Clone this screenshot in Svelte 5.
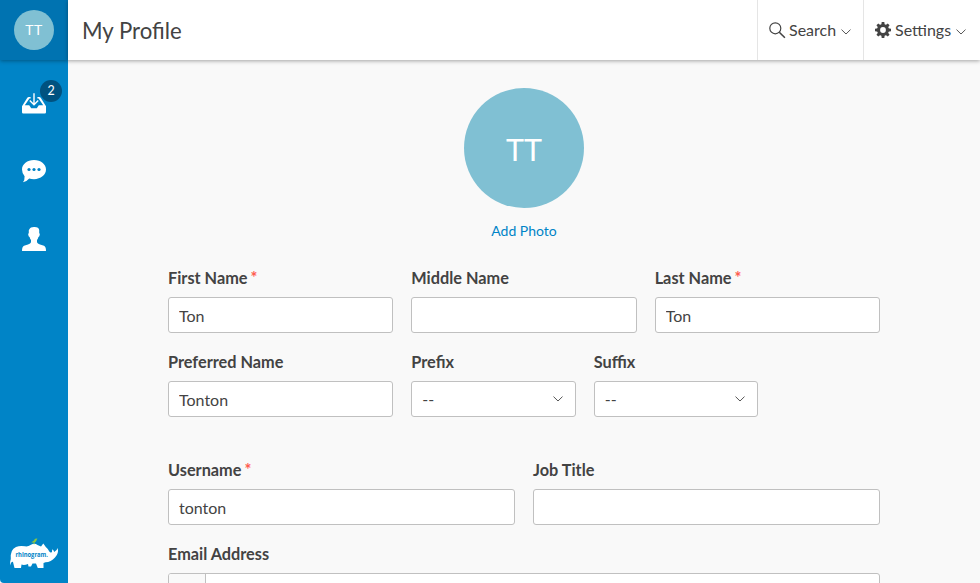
<script>
  const rows = [
    [
      { label: 'First Name', value: 'Ton', required: true, span: 4 },
      { label: 'Middle Name', value: '', span: 4 },
      { label: 'Last Name', value: 'Ton', required: true, span: 4 }
    ],
    [
      { label: 'Preferred Name', value: 'Tonton', span: 4 },
      { label: 'Prefix', value: '--', span: 3, select: true },
      { label: 'Suffix', value: '--', span: 3, select: true }
    ],
    [
      { label: 'Username', value: 'tonton', required: true, span: 6 },
      { label: 'Job Title', value: '', span: 6 }
    ]
  ];
</script>

{#snippet chevron()}
  <svg class="chevron" width="10" height="6" viewBox="0 0 10 6"><path d="M.5.6 5 5 9.5.6" fill="none" stroke="currentColor" stroke-width=".9" /></svg>
{/snippet}

<div class="app">
  <aside>
    <div class="user"><span class="avatar small">TT</span></div>
    <nav>
      <a class="item" href="#inbox" aria-label="Inbox">
        <svg width="24" height="24" viewBox="0 0 24 24">
          <path fill="#fff" d="M0 15.2 5 7.2Q5.6 6 7 6H8.6V7.5H7.4L2.8 14.2H7.2L9.2 17.2H14.8L16.8 14.2H21.2L16.6 7.5H15.4V6H17Q18.4 6 19 7.2L24 15.2V21.3Q24 22.5 22.8 22.5H1.2Q0 22.5 0 21.3Z" />
          <path fill="none" stroke="#fff" stroke-width="1.4" d="M12 2.2V13.5M7.8 9.5 12 13.7 16.2 9.5" />
        </svg>
        <span class="badge">2</span>
      </a>
      <a class="item" href="#messages" aria-label="Messages">
        <svg width="24" height="24" viewBox="0 0 24 24">
          <path fill="#fff" d="M12 1C18.7 1 24 5.1 24 10.6S18.7 20.2 12 20.2Q9.3 20.2 7.2 19.5Q4.8 22.6 1 23.2Q2.8 21 2.6 17.2Q0 14.4 0 10.6C0 5.1 5.3 1 12 1Z" />
          <g fill="#0084c7"><circle cx="7" cy="10.5" r="1.6" /><circle cx="12" cy="10.5" r="1.6" /><circle cx="17" cy="10.5" r="1.6" /></g>
        </svg>
      </a>
      <a class="item" href="#contacts" aria-label="Contacts">
        <svg width="24" height="24" viewBox="0 0 24 24">
          <path fill="#fff" d="M7.5 2Q8.3 0 12 0Q16.8-.1 17.2 3V6.3Q18 6.5 17.7 8Q17.3 10 16.4 10Q16 12 15 13V15.3Q15.4 16.6 18 17.4L22 18.7Q24 19.5 24 24H0Q0 19.5 2 18.7L6 17.4Q8.6 16.6 9 15.3V13Q8 12 7.6 10Q6.7 10 6.3 8Q6 6.5 6.8 6.3V3.2Z" />
        </svg>
      </a>
    </nav>
    <svg class="logo" width="50" height="34" viewBox="0 0 50 34">
      <path fill="#fff" d="M1.4 28.5Q.6 25 1.8 22Q1 12.5 7 10Q11 8.2 16 9.3Q19 9.8 22 7.8Q25.5 5.8 28.5 8L32 9.6 34.3 6.5 36.8 10Q39 11.5 40.3 14.5Q41.8 16.5 43 14.7L43.2 12.2Q45 13.3 45.2 15Q48 13.5 48.7 11Q50 16.5 46 20.5Q42 25 36.5 25.3L34.5 26V31H28.8L27 26.5H23.5L22 29.5H19.5L19 27Q15 28.5 12.5 27.5L12 31H5.5L4 25Q2.3 23.5 1.4 28.5Z" />
      <path fill="#8cc63f" d="M22.3 5.4 25.2 3.2Q25.4 1 28.6 1.8Q27.6 2.3 27.5 3.4Q27 5.1 25.6 5.3V7.2H24.6V5.5Z" />
      <text x="6.4" y="19.7" textLength="32.6" lengthAdjust="spacingAndGlyphs">rhinogram.</text>
    </svg>
  </aside>

  <div class="page">
    <header>
      <h1>My Profile</h1>
      <button class="action search">
        <svg width="17" height="17" viewBox="0 0 17 17" fill="none" stroke="currentColor"><circle cx="6.3" cy="6.3" r="5.5" stroke-width="1.2" /><path d="m10.3 10.3 5.6 5.5" stroke-width="1.6" /></svg>
        <span>Search</span>{@render chevron()}
      </button>
      <button class="action settings">
        <svg width="16" height="16" viewBox="0 0 16 16">
          <g fill="currentColor">
            <path fill-rule="evenodd" d="M8 2A6 6 0 1 1 8 14 6 6 0 0 1 8 2ZM8 5.1A2.9 2.9 0 1 0 8 10.9 2.9 2.9 0 0 0 8 5.1Z" />
            {#each [0, 45, 90, 135, 180, 225, 270, 315] as angle}
              <path d="M6.3 3 6.7 0H9.3L9.7 3Z" transform="rotate({angle} 8 8)" />
            {/each}
          </g>
        </svg>
        <span>Settings</span>{@render chevron()}
      </button>
    </header>
    <main>
      <div class="photo">
        <span class="avatar large">TT</span>
        <a href="#photo">Add Photo</a>
      </div>
      <form>
        {#each rows as row, i}
          <div class="row" class:section={i === 2}>
            {#each row as field}
              <div class="field span-{field.span}">
                <div class="label">{field.label}{#if field.required}<span class="required">*</span>{/if}</div>
                {#if field.select}
                  <div class="control select"><span>{field.value}</span>{@render chevron()}</div>
                {:else}
                  <input class="control" aria-label={field.label} value={field.value} />
                {/if}
              </div>
            {/each}
          </div>
        {/each}
        <div class="row">
          <div class="field span-12">
            <div class="label">Email Address</div>
            <div class="control email"><span class="addon"></span></div>
          </div>
        </div>
      </form>
    </main>
  </div>
</div>

<style>
  * { box-sizing: border-box; }
  :global(body) { background: #f9f9f9; }
  .app { display: flex; height: 583px; overflow: hidden; font-family: Lato, sans-serif; font-size: 16px; color: #434343; background: #f9f9f9; }
  a { text-decoration: none; }
  svg { display: block; flex: none; }
  aside { width: 68px; flex: none; display: flex; flex-direction: column; background: #0084c7; border-bottom-left-radius: 4px; }
  .user { height: 60px; flex: none; display: flex; justify-content: center; align-items: center; background: #0073b1; box-shadow: 0 1px 4px rgba(0, 0, 0, .35); }
  .avatar { display: flex; align-items: center; justify-content: center; border-radius: 50%; background: #80c0d3; color: #fff; }
  .small { width: 40px; height: 40px; font-size: 14px; letter-spacing: .4px; padding-bottom: 1px; }
  .large { width: 120px; height: 120px; font-size: 30.5px; padding-top: 2px; }
  nav { padding-top: 9px; }
  .item { height: 68px; display: flex; align-items: center; justify-content: center; position: relative; }
  .badge { position: absolute; left: 40px; top: 11px; width: 22px; height: 22px; border-radius: 50%; background: #005280; color: #fff; font-size: 12.5px; line-height: 21px; text-align: center; }
  .logo { margin: auto 0 12px 9px; }
  .logo text { font: 700 6.6px "Open Sans", sans-serif; fill: #0084c7; }
  .page { flex: 1; min-width: 0; display: flex; flex-direction: column; }
  header { height: 60px; flex: none; display: flex; background: #fff; box-shadow: 0 1px 4px rgba(0, 0, 0, .35); }
  h1 { flex: 1; margin: 0; padding-left: 14px; font-size: 22.2px; line-height: 62px; font-weight: 400; }
  .action { display: flex; align-items: center; padding: 0 11px; border: 0; border-left: 1px solid #e5e5e5; background: none; font: inherit; color: inherit; }
  .action span { line-height: 20px; padding-bottom: 1px; }
  .search { width: 106px; }
  .search span { margin-left: 3px; }
  .settings { width: 117px; }
  .settings span { margin-left: 4px; }
  .action .chevron { margin: 3px 0 0 5px; }
  main { padding: 28px 100px 0; }
  .photo { display: flex; flex-direction: column; align-items: center; }
  .photo a { margin-top: 14px; font-size: 14px; line-height: 18px; color: #0084c7; }
  form { margin-top: 27px; }
  .row { display: grid; grid-template-columns: repeat(12, minmax(0, 1fr)); column-gap: 18px; margin-bottom: 18px; }
  .section { margin-top: 42px; }
  .span-3 { grid-column: span 3; }
  .span-4 { grid-column: span 4; }
  .span-6 { grid-column: span 6; }
  .span-12 { grid-column: span 12; }
  .label { height: 30px; line-height: 22px; font-size: 16.3px; font-weight: 700; white-space: nowrap; }
  .required { margin-left: 3px; color: #ff5b4d; }
  .control { display: flex; align-items: center; width: 100%; height: 36px; padding: 1px 10px 0; border: 1px solid #c0c0c0; border-radius: 3px; background: #fff; color: #434343; font: 400 16px Lato, sans-serif; outline: 0; }
  .select { justify-content: space-between; padding: 0 12px 0 10px; }
  .select span { padding-bottom: 2px; }
  .email { padding: 0; overflow: hidden; }
  .addon { width: 37px; height: 100%; background: #f9f9f9; border-right: 1px solid #c0c0c0; }
</style>
